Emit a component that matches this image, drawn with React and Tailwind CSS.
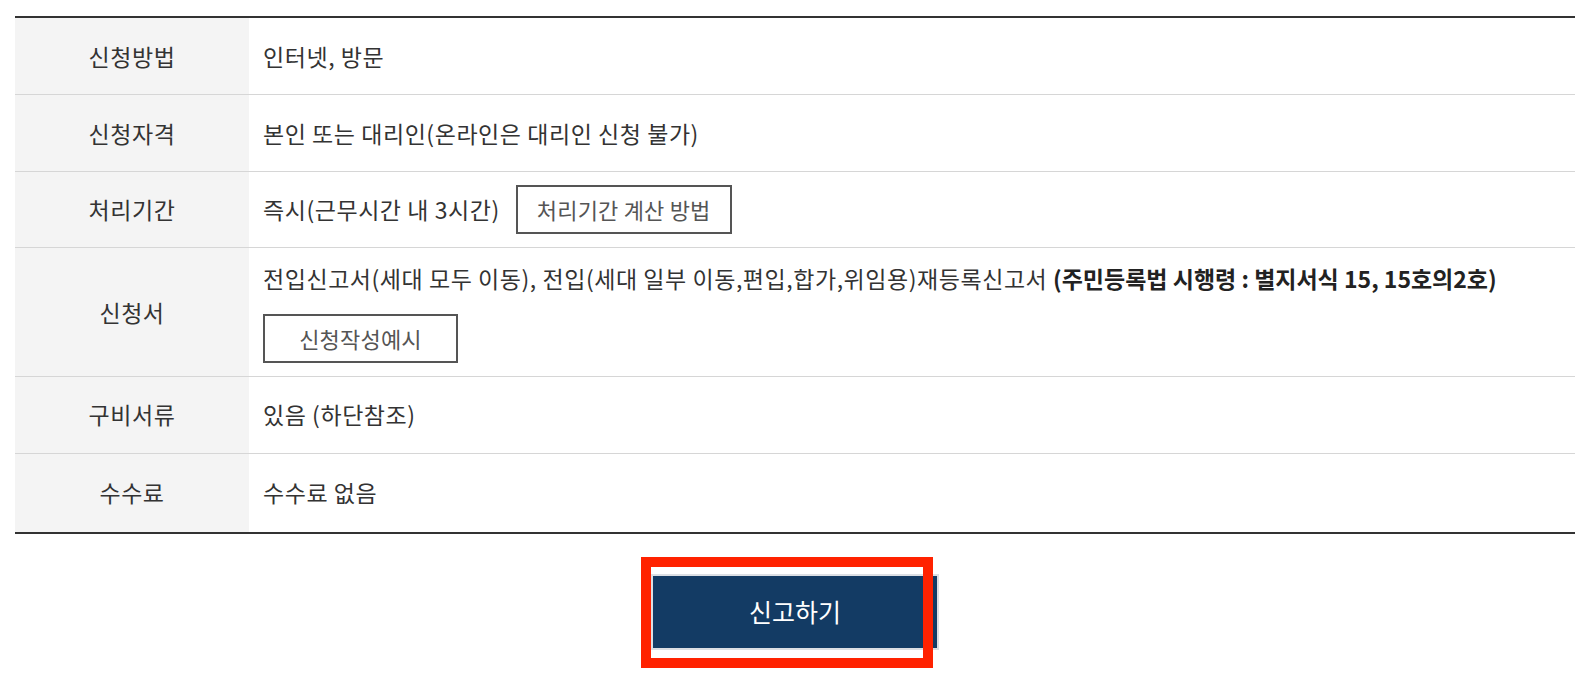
export default function App() {
  const font = { fontFamily: '"Noto Sans CJK KR", "Noto Sans", sans-serif' };
  const rows = [
    { label: "신청방법", h: "min-h-[76px]", content: <span>인터넷, 방문</span> },
    { label: "신청자격", h: "min-h-[77px]", content: <span>본인 또는 대리인(온라인은 대리인 신청 불가)</span> },
    {
      label: "처리기간",
      h: "min-h-[76px]",
      content: (
        <div className="flex items-center gap-[16px]">
          <span>즉시(근무시간 내 3시간)</span>
          <span className="h-[49px] px-[19px] flex items-center border-2 border-[#555] text-[#555] text-[22px] tracking-[0.2px]">
            처리기간 계산 방법
          </span>
        </div>
      ),
    },
    {
      label: "신청서",
      h: "min-h-[77px]",
      content: (
        <div className="flex flex-col items-start gap-[18px]">
          <span>
            전입신고서(세대 모두 이동), 전입(세대 일부 이동,편입,합가,위임용)재등록신고서{" "}
            <b className="font-bold text-[#222] tracking-[0px]">(주민등록법 시행령 : 별지서식 15, 15호의2호)</b>
          </span>
          <span className="h-[49px] w-[195px] flex items-center justify-center border-2 border-[#555] text-[#555] text-[22px] tracking-[0.2px]">
            신청작성예시
          </span>
        </div>
      ),
    },
    { label: "구비서류", h: "min-h-[77px]", content: <span>있음 (하단참조)</span> },
    { label: "수수료", h: "min-h-[79px]", content: <span>수수료 없음</span> },
  ];
  return (
    <div className="w-[1586px] h-[686px] bg-white pt-4" style={font}>
      <div className="ml-[15px] w-[1560px] border-t-2 border-b-2 border-[#333]">
        {rows.map((r, i) => (
          <div
            key={i}
            className={`flex ${r.h} ${i > 0 ? "border-t border-[#d6d6d6]" : ""}`}
          >
            <div className="w-[234px] shrink-0 bg-[#f4f4f4] flex items-center justify-center text-[23px] text-[#333] tracking-[0.55px]">
              {r.label}
            </div>
            <div className="flex-1 flex items-center pl-[14px] py-[13px] text-[23px] text-[#333] tracking-[0.55px]">
              {r.content}
            </div>
          </div>
        ))}
      </div>
      <div className="ml-[15px] w-[1560px] flex justify-center mt-[40px]">
        <div className="relative">
          <div className="w-[288px] h-[76px] bg-[#133b64] border-2 border-[#dcdfe4] flex items-center justify-center text-white text-[25px]">
            신고하기
          </div>
          <div className="absolute left-[-10px] top-[-17px] w-[292px] h-[111px] border-[10px] border-[#ff2200] pointer-events-none"></div>
        </div>
      </div>
    </div>
  );
}
